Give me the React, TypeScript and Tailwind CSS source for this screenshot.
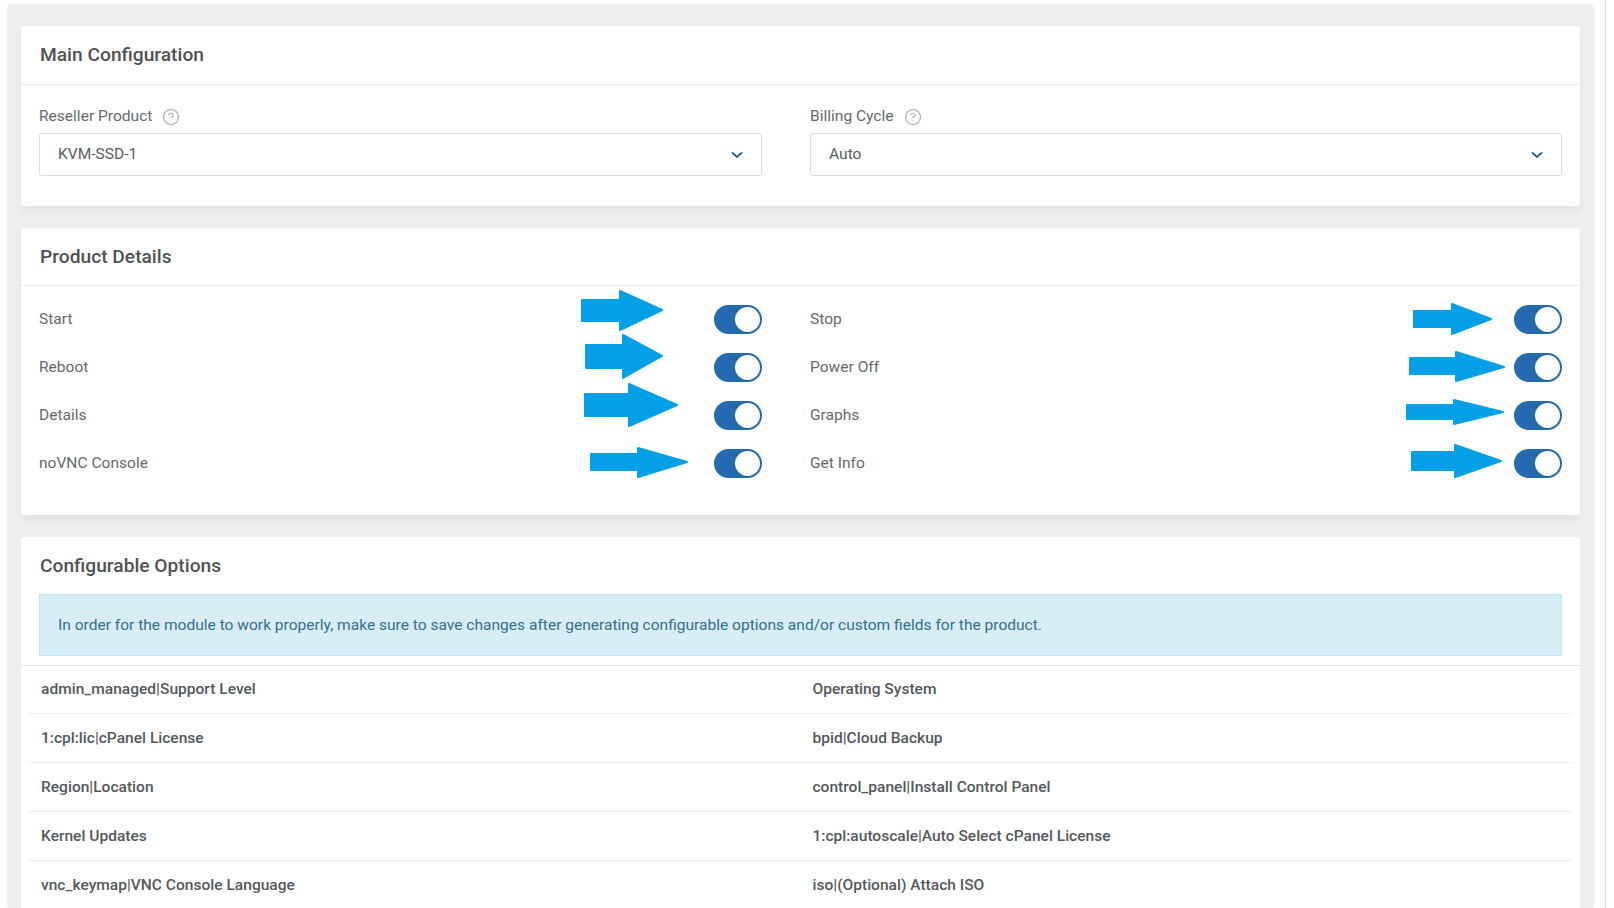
import { CircleHelp } from "lucide-react";

const arrows = [
  [581, 619, 663, 310, 299, 322, 290, 331],
  [585, 622, 663, 356, 344, 369, 334, 379],
  [584, 628, 678, 405, 393, 417, 383, 427],
  [590, 637, 688, 462, 453, 471, 447, 478],
  [1413, 1451, 1492, 319, 310, 328, 303, 335],
  [1409, 1455, 1505, 367, 357, 375, 351, 382],
  [1406, 1453, 1504, 412, 404, 420, 399, 425],
  [1411, 1454, 1502, 461, 451, 471, 444, 478],
];

const rows = [
  ["admin_managed|Support Level", "Operating System"],
  ["1:cpl:lic|cPanel License", "bpid|Cloud Backup"],
  ["Region|Location", "control_panel|Install Control Panel"],
  ["Kernel Updates", "1:cpl:autoscale|Auto Select cPanel License"],
  ["vnc_keymap|VNC Console Language", "iso|(Optional) Attach ISO"],
];

const toggles = [
  ["Start", "Stop"],
  ["Reboot", "Power Off"],
  ["Details", "Graphs"],
  ["noVNC Console", "Get Info"],
];

function Card({ title, tall, children }: { title: string; tall?: boolean; children: React.ReactNode }) {
  return (
    <section className="rounded-[3px] bg-white shadow-[0_5px_10px_rgba(0,0,0,0.05)]">
      <h2 className={`flex ${tall ? "h-[58px]" : "h-[57px] pt-[1px]"} items-center px-[19px] text-[19.2px] font-medium text-[#4f5254]`}>{title}</h2>
      {children}
    </section>
  );
}

function SelectField({ label, value }: { label: string; value: string }) {
  return (
    <div>
      <div className="flex h-[22px] items-center gap-[10px] text-[15.56px] text-[#666a6d]">
        <span>{label}</span>
        <CircleHelp size={18} strokeWidth={1.5} className="text-[#a9a9a9]" />
      </div>
      <div className="mt-[5px] flex h-[43px] items-center justify-between rounded-[3px] border border-[#dcdcdc] bg-white pl-[18px] pr-[18px] text-[15.56px] text-[#5a5e61]">
        <span>{value}</span>
        <svg width="12" height="8" viewBox="0 0 12 8" fill="none" className="shrink-0">
          <path d="M1 1.5 L6 6 L11 1.5" stroke="#2a6096" strokeWidth="2" />
        </svg>
      </div>
    </div>
  );
}

function Toggle() {
  return (
    <span className="flex h-[29px] w-[48px] shrink-0 items-center justify-end rounded-full bg-[#2569ae] pr-[2px]">
      <span className="h-[25px] w-[25px] rounded-full bg-white" />
    </span>
  );
}

function ToggleRow({ label }: { label: string }) {
  return (
    <div className="flex h-[29px] items-center justify-between text-[15.56px] text-[#666a6d]">
      <span className="pt-[1px]">{label}</span>
      <Toggle />
    </div>
  );
}

export default function App() {
  return (
    <div className="relative flex h-[908px] w-full overflow-hidden bg-white font-['Roboto',sans-serif]">
      <main className="ml-[8px] mt-[5px] h-[903px] w-[1585px] shrink-0 rounded-t-[4px] bg-[#eeeeee] pl-[13px] pr-[13px] pt-[21px] shadow-[0_0_3px_rgba(0,0,0,0.15)]">
        <div className="flex flex-col gap-[22px]">
          <Card title="Main Configuration" tall>
            <div className="grid h-[122px] grid-cols-[723px_752px] gap-x-[48px] border-t border-[#ececec] pl-[18px] pt-[21px]">
              <SelectField label="Reseller Product" value="KVM-SSD-1" />
              <SelectField label="Billing Cycle" value="Auto" />
            </div>
          </Card>

          <Card title="Product Details">
            <div className="grid h-[230px] grid-cols-[723px_752px] content-start gap-x-[48px] gap-y-[19px] border-t border-[#ececec] pl-[18px] pt-[19px]">
              {toggles.map(([a, b]) => [
                <ToggleRow key={a} label={a} />,
                <ToggleRow key={b} label={b} />,
              ])}
            </div>
          </Card>

          <section className="rounded-t-[3px] bg-white">
            <h2 className="flex h-[57px] items-center px-[19px] pt-[1px] text-[19.2px] font-medium text-[#4f5254]">
              Configurable Options
            </h2>
            <div className="ml-[18px] flex h-[62px] w-[1523px] items-center border border-[#bce8f1] bg-[#d9edf7] pl-[18px] pt-[1px] text-[15.56px] text-[#31708f]">
              In order for the module to work properly, make sure to save changes after generating configurable options and/or custom fields for the product.
            </div>
            <div className="mt-[9px] border-t border-[#e6e6e6] px-[7px]">
              {rows.map(([a, b], i) => (
                <div
                  key={a}
                  className={`grid ${i === 0 ? "h-[48px]" : "h-[49px]"} grid-cols-2 items-center border-b border-[#eeeeee] pt-[1px] text-[15.56px] font-medium text-[#55595c]`}
                >
                  <span className="pl-[13px]">{a}</span>
                  <span className="pl-[12px]">{b}</span>
                </div>
              ))}
            </div>
          </section>
        </div>
      </main>
      <div className="ml-[12px] h-full w-px shrink-0 bg-[#dddddd]" />

      <svg className="pointer-events-none absolute left-0 top-0 h-[908px] w-[1614px]" viewBox="0 0 1614 908">
        {arrows.map(([x, base, tip, y, r1, r2, h1, h2]) => (
          <path
            key={y + x}
            d={`M${x + 1} ${r1 + 1} H${base + 1} V${h1 + 1} L${tip - 1} ${y} L${base + 1} ${h2 - 1} V${r2 - 1} H${x + 1} Z`}
            fill="#03a0e8"
            stroke="#03a0e8"
            strokeWidth="2"
            strokeLinejoin="round"
          />
        ))}
      </svg>
    </div>
  );
}
